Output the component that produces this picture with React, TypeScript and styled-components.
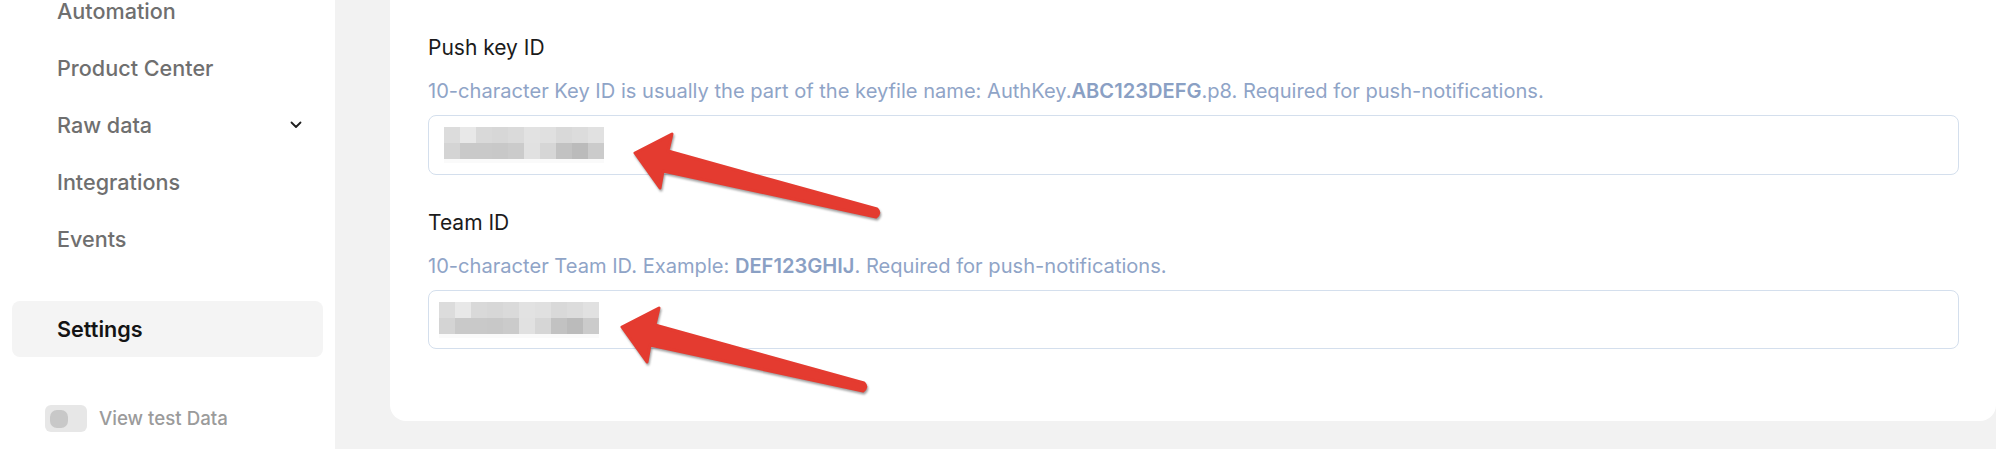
import React from "react";
import styled, { createGlobalStyle } from "styled-components";

const GlobalStyle = createGlobalStyle`
  html, body {
    margin: 0;
    padding: 0;
    height: 449px;
    overflow: hidden;
    background: #f2f2f2;
    font-family: Inter, "Noto Sans", "Liberation Sans", sans-serif;
  }
  * { box-sizing: border-box; }
`;

const Page = styled.div`
  display: flex;
  width: 1996px;
  height: 449px;
  overflow: hidden;
`;

const Sidebar = styled.aside`
  width: 335px;
  flex-shrink: 0;
  background: #ffffff;
  padding: 0 12px;
  display: flex;
  flex-direction: column;
`;

const NavList = styled.nav`
  display: flex;
  flex-direction: column;
  margin-top: -18px;
`;

const NavItem = styled.div<{ $active?: boolean }>`
  height: ${(p) => (p.$active ? "56px" : "57px")};
  display: flex;
  align-items: center;
  justify-content: space-between;
  padding: 0 21px 0 45px;
  border-radius: 8px;
  font-size: 21.6px;
  font-weight: ${(p) => (p.$active ? 600 : 500)};
  color: ${(p) => (p.$active ? "#141414" : "#6f6f6f")};
  background: ${(p) => (p.$active ? "#f4f4f4" : "transparent")};
`;

const SettingsGroup = styled.div`
  margin-top: 34px;
`;

const ToggleRow = styled.div`
  margin-top: 48px;
  padding-left: 33px;
  display: flex;
  align-items: center;
  gap: 12px;
`;

const Track = styled.div`
  width: 42px;
  height: 27px;
  border-radius: 6px;
  background: #e7e7e7;
  display: flex;
  align-items: center;
  padding-left: 5px;
`;

const Knob = styled.div`
  width: 18px;
  height: 18px;
  border-radius: 7px;
  background: #c8c8c8;
`;

const ToggleLabel = styled.span`
  font-size: 18.7px;
  font-weight: 500;
  color: #9b9b9b;
`;

const Main = styled.main`
  flex: 1;
  padding-left: 55px;
  background: #f2f2f2;
`;

const Card = styled.section`
  margin-top: -24px;
  background: #ffffff;
  border-radius: 16px;
  padding: 58px 37px 72px 38px;
  display: flex;
  flex-direction: column;
  gap: 34px;
`;

const Field = styled.div`
  display: flex;
  flex-direction: column;
`;

const Label = styled.div`
  font-size: 21px;
  line-height: 28px;
  font-weight: 400;
  color: #1b1b1b;
`;

const Hint = styled.div`
  margin-top: 16px;
  font-size: 20.1px;
  line-height: 26px;
  color: #8fa4c7;
  b {
    font-weight: 600;
    color: #8aa0c4;
  }
`;

const InputBox = styled.div<{ $height: number }>`
  position: relative;
  margin-top: 11px;
  height: ${(p) => p.$height}px;
  border: 1px solid #d4dfed;
  border-radius: 8px;
  background: #ffffff;
  display: flex;
  align-items: flex-start;
`;

const Pixels = styled.div<{ $left: number }>`
  margin: 11px 0 0 ${(p) => p.$left}px;
  display: grid;
  grid-template-columns: repeat(10, 16px);
  grid-auto-rows: 16px;
`;

const Cell = styled.div<{ $shade: string }>`
  background: ${(p) => p.$shade};
`;

const ArrowSvg = styled.svg<{ $x: number; $y: number }>`
  position: absolute;
  left: ${(p) => p.$x - 12}px;
  top: ${(p) => p.$y - 32}px;
  overflow: visible;
  filter: drop-shadow(1px 2px 1px rgba(40, 40, 40, 0.45));
`;

const ROW1 = ["#dcdcdc", "#e8e8e8", "#d9d9d9", "#d7d7d7", "#dadada", "#e2e2e2", "#e0e0e0", "#d9d9d9", "#dcdcdc", "#e1e1e1"];
const ROW2 = ["#d4d4d4", "#c9c9c9", "#c9c9c9", "#c8c8c8", "#cbcbcb", "#e1e1e1", "#d6d6d6", "#c2c2c2", "#bbbbbb", "#cbcbcb"];
const ROW3 = Array(10).fill("#fafafa");

const BlurredValue: React.FC<{ left: number }> = ({ left }) => (
  <Pixels $left={left}>
    {[...ROW1, ...ROW2, ...ROW3].map((c, i) => (
      <Cell key={i} $shade={c} style={i >= 20 ? { height: 4 } : undefined} />
    ))}
  </Pixels>
);

const Arrow: React.FC<{ x: number; y: number }> = ({ x, y }) => (
  <ArrowSvg $x={x} $y={y} width="264" height="110" viewBox="-12 -32 264 110">
    <path
      d="M0 0 L37 -19 L33 -2 L242 56 Q246 60 241 64 L28 18 L25 35 Z"
      fill="#e43b30"
      stroke="#e43b30"
      strokeWidth="3"
      strokeLinejoin="round"
    />
  </ArrowSvg>
);

const Chevron = () => (
  <svg width="12" height="8" viewBox="0 0 12 8">
    <path d="M1.5 1.5 L6 6 L10.5 1.5" fill="none" stroke="#1f1f1f" strokeWidth="1.8" strokeLinecap="round" strokeLinejoin="round" />
  </svg>
);

export default function App() {
  return (
    <>
      <GlobalStyle />
      <Page>
        <Sidebar>
          <NavList>
            <NavItem>Automation</NavItem>
            <NavItem>Product Center</NavItem>
            <NavItem>
              Raw data
              <Chevron />
            </NavItem>
            <NavItem>Integrations</NavItem>
            <NavItem>Events</NavItem>
          </NavList>
          <SettingsGroup>
            <NavItem $active>Settings</NavItem>
          </SettingsGroup>
          <ToggleRow>
            <Track>
              <Knob />
            </Track>
            <ToggleLabel>View test Data</ToggleLabel>
          </ToggleRow>
        </Sidebar>
        <Main>
          <Card>
            <Field>
              <Label>Push key ID</Label>
              <Hint>
                10-character Key ID is usually the part of the keyfile name: AuthKey.<b>ABC123DEFG</b>.p8. Required for push-notifications.
              </Hint>
              <InputBox $height={60}>
                <BlurredValue left={15} />
                <Arrow x={206} y={37} />
              </InputBox>
            </Field>
            <Field>
              <Label>Team ID</Label>
              <Hint>
                10-character Team ID. Example: <b>DEF123GHIJ</b>. Required for push-notifications.
              </Hint>
              <InputBox $height={59}>
                <BlurredValue left={10} />
                <Arrow x={193} y={36} />
              </InputBox>
            </Field>
          </Card>
        </Main>
      </Page>
    </>
  );
}
